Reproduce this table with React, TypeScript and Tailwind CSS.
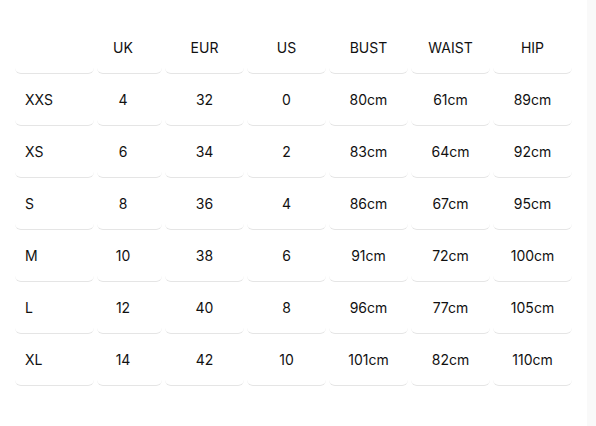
import React from 'react';

const headers = ['', 'UK', 'EUR', 'US', 'BUST', 'WAIST', 'HIP'];

const rows: string[][] = [
  ['XXS', '4', '32', '0', '80cm', '61cm', '89cm'],
  ['XS', '6', '34', '2', '83cm', '64cm', '92cm'],
  ['S', '8', '36', '4', '86cm', '67cm', '95cm'],
  ['M', '10', '38', '6', '91cm', '72cm', '100cm'],
  ['L', '12', '40', '8', '96cm', '77cm', '105cm'],
  ['XL', '14', '42', '10', '101cm', '82cm', '110cm'],
];

function Cell({ value, col }: { value: string; col: number }) {
  // first column is left aligned, the UK column sits a little left of centre
  const align =
    col === 0 ? 'justify-start pl-[10px]' : col === 1 ? 'justify-center pr-[13px]' : 'justify-center';
  return (
    <div
      className={`h-[52px] flex items-center ${align} rounded-[6px] border-b-[1.5px] border-[#e5e5e5] bg-white`}
    >
      {value}
    </div>
  );
}

export default function App() {
  return (
    <div className="flex h-[426px] w-[596px] bg-white overflow-hidden">
      <div className="flex-1 pl-[15px] pt-[22px]">
        <div
          className="grid grid-cols-[79px_65px_79px_79px_79px_79px_79px] gap-x-[3px] text-[14px] text-[#111111]"
          style={{ fontFamily: 'Inter, "Open Sans", sans-serif' }}
        >
          {headers.map((h, i) => (
            <Cell key={`h-${i}`} value={h} col={i} />
          ))}
          {rows.map((row, r) =>
            row.map((v, i) => <Cell key={`${r}-${i}`} value={v} col={i} />)
          )}
        </div>
      </div>
      <div className="w-[9px] h-full bg-[#f9f9f9]" />
    </div>
  );
}
